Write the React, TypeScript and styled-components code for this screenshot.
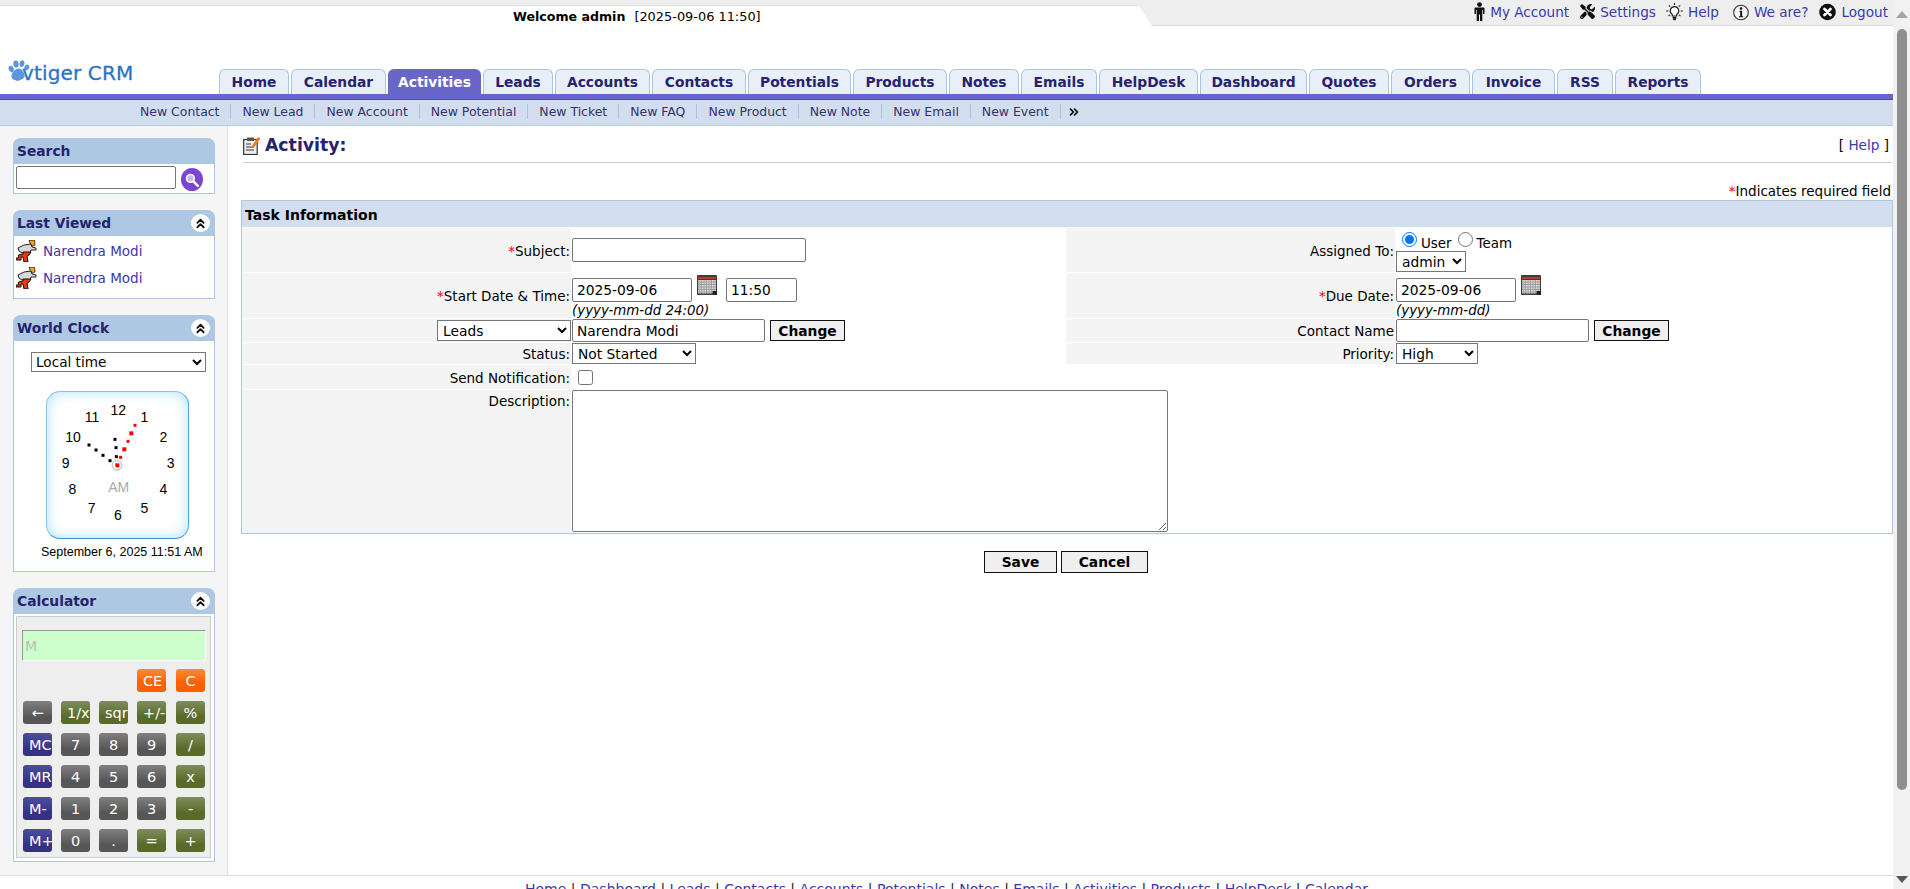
import React from "react";
import styled, { createGlobalStyle } from "styled-components";
import { FaTools } from "react-icons/fa";
import { ChevronsUp, ChevronsRight } from "lucide-react";

const UI = `"DejaVu Sans", Verdana, sans-serif`;
const LINK = "#3b38ab";
const NAVY = "#25226e";

const Global = createGlobalStyle`
  html, body { height: 100%; overflow: hidden; }
  body { margin: 0; background: #fff; font-family: ${UI}; font-size: 12.5px; color: #000; }
  * { box-sizing: border-box; }
`;

const Frame = styled.div`display: flex; height: 889px; overflow: hidden;`;
const Page = styled.div`flex: 1; min-width: 0; display: flex; flex-direction: column; overflow: hidden;`;

/* scrollbar */
const ScrollTrack = styled.div`
  width: 17px; flex: none; background: #f1f1f1; display: flex; flex-direction: column; align-items: center;
  justify-content: space-between; padding: 11px 0 6px 1px;
`;
const ScrollArrow = styled.div<{ $down?: boolean }>`
  width: 0; height: 0; border-left: 6px solid transparent; border-right: 6px solid transparent;
  ${(p) => (p.$down ? "border-top: 7px solid #555;" : "border-bottom: 7px solid #a3a3a3;")}
`;
const ScrollThumb = styled.div`
  width: 10px; height: 761px; border-radius: 5px; background: #8f8f8f; margin-top: 11px; margin-bottom: auto;
`;

/* top strip */
const TopStrip = styled.div`display: flex; height: 26px; background: #eee; flex: none;`;
const WelcomeTab = styled.div`
  width: 1152px; flex: none; margin-top: 5px; padding: 1px 0 0 513px; background: #fff; border-top: 1px solid #ddd;
  clip-path: polygon(0 0, 1138px 0, 1152px 100%, 0 100%);
  display: flex; align-items: center; gap: 9px; height: 21px; font-size: 12.9px;
`;
const WelcomeName = styled.b`font-size: 12.6px;`;
const TopLinks = styled.div`
  flex: 1; display: flex; justify-content: flex-end; align-items: center; padding: 0 5px 2px 0; border-bottom: 1px solid #ddd;
`;
const TopLink = styled.a<{ $gap: number }>`
  display: flex; align-items: center; gap: 5px; color: ${LINK}; font-size: 13.6px; margin-left: ${(p) => p.$gap}px; white-space: nowrap;
`;
const TopIconBox = styled.span<{ $w: number }>`display: flex; width: ${(p) => p.$w}px; justify-content: center; color: #111;`;

/* header */
const HeadRow = styled.div`display: flex; height: 68px; flex: none;`;
const LogoArea = styled.div`width: 219px; flex: none; padding: 34px 0 0 8px; display: flex; align-items: flex-start;`;
const LogoText = styled.span`
  color: #2b74c4; font-size: 20px; margin-left: -8px; line-height: 27px; -webkit-text-stroke: 0.3px #2b74c4; letter-spacing: 0.15px; white-space: nowrap;
`;
const Tabs = styled.div`display: flex; align-items: flex-end; gap: 2px;`;
const Tab = styled.a<{ $w: number; $on?: boolean }>`
  display: flex; align-items: center; justify-content: center; width: ${(p) => p.$w}px; height: 25px;
  font-weight: 700; font-size: 13.8px; border: 1px solid ${(p) => (p.$on ? "#6866c9" : "#aac5e2")}; border-bottom: 0;
  border-radius: 6px 6px 0 0; background: ${(p) => (p.$on ? "#6866c9" : "#e9eff9")}; color: ${(p) => (p.$on ? "#fff" : NAVY)};
`;
const PurpleBar = styled.div`height: 6px; flex: none; background: #6866c9; border-bottom: 1px solid #4f4da6;`;
const SubNav = styled.div`
  height: 26px; flex: none; background: #d2deee; border-bottom: 1px solid #b3cbe4; display: flex; align-items: center; padding: 0 0 2px 140px;
`;
const SubItem = styled.a`
  color: #34316f; font-size: 12.44px; padding: 0 11px; border-right: 1px solid #a9c4e0; line-height: 15px; white-space: nowrap;
  &:first-child { padding-left: 0; }
`;
const SubMore = styled.span`display: flex; color: #111; margin-left: 6px;`;

/* body */
const Body = styled.div`flex: 1; min-height: 0; display: flex;`;
const Sidebar = styled.aside`
  width: 228px; flex: none; background: #f5f5f5; border-right: 1px solid #ddd; padding: 12px 0 0 13px; display: flex; flex-direction: column; gap: 16px;
`;
const Panel = styled.section`width: 202px; border: 1px solid #aec8e3; border-top: 0; border-radius: 8px 8px 0 0; background: #fff;`;
const PanelHead = styled.div`
  height: 26px; margin: 0 -1px; background: #aec8e3; border-radius: 8px 8px 0 0; display: flex; align-items: center; justify-content: space-between;
  padding: 0 5px 0 4px; color: ${NAVY}; font-weight: 700; font-size: 13.8px;
`;
const Toggle = styled.span`
  width: 19px; height: 18px; border-radius: 50%; background: #fff; display: flex; align-items: center; justify-content: center; color: #111;
`;
const SearchBody = styled.div`height: 29px; display: flex; padding: 2px 0 0 2px; gap: 5px;`;
const SearchInput = styled.input`width: 160px; height: 23px; border: 1px solid #767676; border-radius: 2px; background: #fff; padding: 1px 2px;`;
const SearchBtn = styled.span`
  width: 22px; height: 23px; margin-top: 2px; border-radius: 50%; background: #7a45d3; display: flex; align-items: center; justify-content: center;
`;
const ViewedList = styled.div`height: 62px; padding-top: 1px;`;
const ViewedRow = styled.a`display: flex; align-items: center; gap: 6px; height: 27px; padding-left: 2px; color: ${LINK}; font-size: 13.5px;`;
const ClockBody = styled.div`height: 230px; padding-top: 11px;`;
const ClockSelect = styled.select`
  display: block; width: 175px; height: 20px; margin-left: 17px; border: 1px solid #767676; background: #fff; font: 13.6px ${UI}; color: #000; padding: 0;
`;
const ClockFace = styled.div`
  width: 143px; height: 148px; margin: 19px 0 0 32px; border-radius: 14px; border: 1px solid #8fc0e2; border-bottom-color: #3f8fc8;
  border-right-color: #5aa2d4; background: #fff; box-shadow: inset 0 0 13px #a9e2ff; overflow: hidden;
`;
const ClockDate = styled.div`
  margin: 5px 0 0 27px; font: 12.5px "Liberation Sans", Arial, sans-serif; white-space: nowrap; line-height: 16px;
`;
const CalcBody = styled.div`
  width: 195px; height: 242px; margin: 2px 0 3px 2px; background: #eee; border: 1px solid #ccc; padding: 13px 0 0 5px;
`;
const CalcDisplay = styled.div`
  width: 184px; height: 31px; background: #ccffcc; border: 1px solid #fff; border-top-color: #999; border-left-color: #999; color: #bbb; font-size: 14px;
  padding: 6px 0 0 2px; line-height: 18px;
`;
const CalcGrid = styled.div`
  display: grid; grid-template-columns: 29px 29px 29px 30px 29px; column-gap: 9px; row-gap: 9px; grid-auto-rows: 23px; margin: 8px 0 0 1px;
`;
const tones = {
  orange: "linear-gradient(#ff8a3c, #f86000 60%)",
  grey: "linear-gradient(#808080, #565656 70%)",
  green: "linear-gradient(#7e8d5c, #5a6a2a 70%)",
  blue: "linear-gradient(#4f4ca6, #353285 70%)",
};
const CalcKey = styled.span<{ $tone: keyof typeof tones; $col?: number }>`
  display: flex; align-items: center; justify-content: safe center; width: 29px; padding: 0 6px; overflow: hidden; white-space: nowrap;
  border-radius: 3px; color: #fff; font-size: 14.5px; background: ${(p) => tones[p.$tone]};
  ${(p) => (p.$col ? `grid-column: ${p.$col};` : "")}
`;

/* main */
const Main = styled.main`flex: 1; min-width: 0; padding: 0 0 0 13px; display: flex; flex-direction: column;`;
const TitleRow = styled.div`
  height: 37px; margin: 0 1px 0 2px; border-bottom: 1px solid #ccc; display: flex; align-items: center; justify-content: space-between; padding-top: 2px;
`;
const Title = styled.h1`margin: 0; display: flex; align-items: center; gap: 4px; font-size: 17.300px; font-weight: 700; color: ${NAVY};`;
const HelpLink = styled.span`font-size: 13.6px; padding-right: 3px; a { color: ${LINK}; }`;
const Required = styled.div`height: 37px; display: flex; align-items: flex-end; justify-content: flex-end; padding: 0 2px 1px 0; font-size: 13.5px; line-height: 16px;`;
const Star = styled.span`color: #f00;`;

const FormTable = styled.div`
  height: 334px; border: 1px solid #aec8e3; display: grid; grid-template-columns: 329px 495px 329px 1fr;
  grid-template-rows: 26px 44px 45px 23px 21px 24px 1fr; row-gap: 1px;
`;
const FormHead = styled.div`
  grid-column: 1 / -1; background: #d2deee; font-weight: 700; font-size: 14px; display: flex; align-items: center; padding: 1px 0 0 3px;
`;
const Label = styled.div<{ $top?: boolean }>`
  background: #f4f4f4; display: flex; justify-content: flex-end; align-items: ${(p) => (p.$top ? "flex-start" : "center")};
  padding: ${(p) => (p.$top ? "2px 1px 0 0" : "1px 1px 0 0")}; font-size: 13.5px; white-space: nowrap; line-height: 18px;
`;
const LabelSelectCell = styled(Label)`align-items: center; padding: 0;`;
const Value = styled.div`padding-left: 1px; display: flex; align-items: center; gap: 5px; min-width: 0;`;
const ValueStack = styled.div`padding: 5px 0 0 1px; min-width: 0;`;
const ValueLine = styled.div`display: flex; align-items: flex-start;`;
const Hint = styled.div`font-style: italic; font-size: 13.4px; line-height: 16px; margin-top: 1px;`;
const Blank = styled.div``;
const TextInput = styled.input<{ $w: number; $h?: number }>`
  width: ${(p) => p.$w}px; height: ${(p) => p.$h ?? 24}px; border: 1px solid #767676; border-radius: 2px; background: #fff; padding: 1px 4px;
  font: 13.8px ${UI}; color: #000;
`;
const Select = styled.select<{ $w: number }>`
  width: ${(p) => p.$w}px; height: 21px; border: 1px solid #767676; border-radius: 0; background: #fff; font: 13.8px ${UI}; color: #000; padding: 1px 0 0 1px;
`;
const LookupBtn = styled.button`
  width: 75px; height: 21px; padding: 0; background: #efefef; border: 1px solid #111; color: #000; font: 700 13.8px ${UI};
`;
const CalIcon = styled.span<{ $ml: number; $mr?: number }>`display: flex; margin: -3px ${(p) => p.$mr ?? 0}px 0 ${(p) => p.$ml}px;`;
const Check = styled.input`width: 15px; height: 15px; margin: 0 0 0 6px;`;
const AssignLine = styled.div`display: flex; align-items: flex-start; height: 19px; margin-left: 6px; font-size: 13.4px;`;
const Radio = styled.input`width: 15px; height: 15px; margin: 0;`;
const RadioText = styled.span<{ $r: number }>`margin: 4px ${(p) => p.$r}px 0 4px; line-height: 16px;`;
const AssignStack = styled.div`padding: 4px 0 0 1px;`;
const Area = styled.textarea`
  display: block; width: 596px; height: 142px; border: 1px solid #767676; border-radius: 2px; background: #fff; padding: 2px; font: 13.3px ${UI};
`;
const AreaCell = styled.div`grid-column: 2 / -1; padding-left: 1px;`;
const Actions = styled.div`display: flex; justify-content: center; gap: 4px; margin-top: 17px; padding-right: 2px;`;
const ActionBtn = styled.button<{ $w: number }>`
  width: ${(p) => p.$w}px; height: 22px; padding: 0; background: #efefef; border: 1px solid #111; color: #000; font: 700 13.8px ${UI};
`;
const Footer = styled.footer`
  flex: none; height: 14px; border-top: 1px solid #ddd; text-align: center; font-size: 14px; padding-top: 5px; line-height: 16px; white-space: nowrap; color: #222;
  a { color: ${LINK}; }
`;

/* icons */
const PersonIcon = () => (
  <svg width="11" height="19" viewBox="0 0 11 19" fill="#111">
    <circle cx="5.5" cy="2.6" r="2.4" />
    <path d="M1.5 5.6h8a1 1 0 0 1 1 1V12H9v-4H8.3v11H6V12.5H5V19H2.7V8H2v4H.5V6.6a1 1 0 0 1 1-1z" />
  </svg>
);
const BulbIcon = () => (
  <svg width="17" height="18" viewBox="0 0 17 18" fill="none" stroke="#222" strokeWidth="1.2">
    <path d="M8.5 3.6a4.2 4.2 0 0 0-2.2 7.8v1.6h4.4v-1.6a4.2 4.2 0 0 0-2.2-7.8z" fill="#fff" />
    <path d="M6.6 14.6h3.8M7.2 16.4h2.6" strokeWidth="1.6" />
    <path d="M8.5 0v2M2.8 2.3l1.4 1.4M14.2 2.3l-1.4 1.4M.2 8h2.2M14.6 8h2.2M2.6 13l1.4-1.2M14.4 13 13 11.800" strokeWidth="1.1" />
  </svg>
);
const InfoIcon = () => (
  <svg width="16" height="18" viewBox="0 0 16 18" fill="none">
    <circle cx="8" cy="9.500" r="7.300" stroke="#333" strokeWidth="1.100" fill="#f6f6f6" />
    <circle cx="8" cy="5.500" r="1.300" fill="#111" />
    <path d="M6.500 7.800h2.600v5.400h1.100v1H6v-1h1.200V8.800H6.500z" fill="#111" />
  </svg>
);
const LogoutIcon = () => (
  <svg width="17" height="18" viewBox="0 0 17 18">
    <circle cx="8.500" cy="9" r="8.300" fill="#111" />
    <path d="M5.500 6l6 6M11.500 6l-6 6" stroke="#fff" strokeWidth="2.800" strokeLinecap="round" />
  </svg>
);
const PawIcon = () => (
  <svg width="22" height="22" viewBox="0 0 22 22" fill="#5a97dc">
    <ellipse cx="3.200" cy="9" rx="2.500" ry="3.200" transform="rotate(-25 3.200 9)" />
    <ellipse cx="8" cy="4" rx="2.600" ry="3.600" transform="rotate(-10 8 4)" />
    <ellipse cx="14" cy="3.600" rx="2.400" ry="3.400" transform="rotate(10 14 3.600)" />
    <ellipse cx="18.800" cy="7.500" rx="2.300" ry="3" transform="rotate(30 18.800 7.500)" />
    <path d="M10.500 8.500c3.500 0 5.500 4 6 7 .4 3-2.400 3.500-6.500 5.500-3-1-7-1.500-6.500-5.500.5-3 3.500-7 7-7z" />
  </svg>
);
const MagnifierIcon = () => (
  <svg width="16" height="16" viewBox="0 0 15 15" fill="none">
    <circle cx="6" cy="6" r="3.600" stroke="#fff" strokeWidth="1.500" fill="#c9b8f0" />
    <path d="M9 9l4 4" stroke="#fff" strokeWidth="2.400" strokeLinecap="round" />
  </svg>
);
const RunnerIcon = () => (
  <svg width="21" height="22" viewBox="0 0 21 22">
    <path d="M13 .5l5.500-.5.5 5-3.500 1.500z" fill="#f0a020" stroke="#222" strokeWidth=".8" />
    <path d="M2 8l6-3 7-1 1 3 4 1v2h-5l-1 3H6L3 11z" fill="#d8d8d8" stroke="#222" strokeWidth="1" />
    <path d="M7 12h8l-2 3-2 1 1 6H8l-1-5H5v3H0v-2h2.500v-3l4.500-1z" fill="#e63a10" stroke="#111" strokeWidth="1" />
  </svg>
);
const TitleIcon = () => (
  <svg width="18" height="19" viewBox="0 0 18 19">
    <rect x=".7" y="3.500" width="13.500" height="15" fill="#eee" stroke="#333" strokeWidth="1.200" />
    <rect x="4" y="1.500" width="7" height="3.500" fill="#555" />
    <path d="M3 8h5M3 11h8M3 14h8" stroke="#333" strokeWidth="1" />
    <path d="M9 10l6-9 2.500 1.500L11 11.500z" fill="#f07a1a" />
  </svg>
);
const CalendarIcon = () => (
  <svg width="20" height="20" viewBox="0 0 20 20">
    <defs>
      <pattern id="calGrid" width="2.500" height="2.500" patternUnits="userSpaceOnUse">
        <rect width="2.500" height="2.500" fill="#9a9a9a" />
        <rect width="1.500" height="1.500" fill="#e4e4e4" />
      </pattern>
    </defs>
    <rect width="20" height="20" rx="1" fill="#3c3c3c" />
    <rect x="1" y="2" width="18" height="2" fill="#c8332e" />
    <rect x="1" y="5" width="18" height="13.500" fill="url(#calGrid)" />
    <rect x="15.500" y="16" width="4.500" height="4" fill="#222" />
  </svg>
);
const ClockDrawing = () => {
  const nums: [string, number, number][] = [
    ["12", 72.3, 19], ["1", 98.3, 26.3], ["2", 117.3, 46.3], ["3", 124.7, 72.3], ["4", 117.3, 98.3], ["5", 98.3, 117.3],
    ["6", 72, 124.3], ["7", 45.7, 117.3], ["8", 26.3, 98.3], ["9", 19.7, 72.3], ["10", 27, 46.3], ["11", 46, 26.3],
  ];
  const black: [number, number][] = [[147, 180], [168, 195], [189, 211], [210, 227], [225, 163], [228, 188], [229, 215]];
  const red: [number, number, number][] = [[285, 121, 3], [274, 145, 4], [264, 169, 3], [253, 193, 4], [242, 217, 3], [232, 241, 4]];
  return (
    <svg width="141" height="146" viewBox="1 1 141 146" fontFamily="Liberation Sans, Arial, sans-serif">
      {nums.map(([t, x, y]) => (
        <text key={t} x={x} y={y + 5} fontSize="14" textAnchor="middle" fill="#000">{t}</text>
      ))}
      <text x="72.700" y="100.500" fontSize="14" textAnchor="middle" fill="#aaa">AM</text>
      <circle cx="71" cy="74.300" r="4.700" fill="none" stroke="#ccc" strokeWidth="1.500" />
      {black.map(([x, y]) => (
        <rect key={x} x={x / 3 - 7.500} y={y / 3 - 7.500} width="3" height="3" fill="#000" />
      ))}
      {red.map(([x, y, s]) => (
        <rect key={x} x={x / 3 - 6 - s / 2} y={y / 3 - 6 - s / 2} width={s} height={s} fill="#f00" />
      ))}
    </svg>
  );
};

const tabs: [string, number][] = [
  ["Home", 70], ["Calendar", 95], ["Activities", 93], ["Leads", 70], ["Accounts", 95], ["Contacts", 94], ["Potentials", 103], ["Products", 94],
  ["Notes", 70], ["Emails", 76], ["HelpDesk", 99], ["Dashboard", 107], ["Quotes", 80], ["Orders", 79], ["Invoice", 83], ["RSS", 56], ["Reports", 86],
];
const subs = ["New Contact", "New Lead", "New Account", "New Potential", "New Ticket", "New FAQ", "New Product", "New Note", "New Email", "New Event"];
const keys: [string, keyof typeof tones][] = [
  ["←", "grey"], ["1/x", "green"], ["sqrt", "green"], ["+/-", "green"], ["%", "green"],
  ["MC", "blue"], ["7", "grey"], ["8", "grey"], ["9", "grey"], ["/", "green"],
  ["MR", "blue"], ["4", "grey"], ["5", "grey"], ["6", "grey"], ["x", "green"],
  ["M-", "blue"], ["1", "grey"], ["2", "grey"], ["3", "grey"], ["-", "green"],
  ["M+", "blue"], ["0", "grey"], [".", "grey"], ["=", "green"], ["+", "green"],
];
const footerLinks = ["Home", "Dashboard", "Leads", "Contacts", "Accounts", "Potentials", "Notes", "Emails", "Activities", "Products", "HelpDesk", "Calendar"];

const Up = () => (
  <Toggle><ChevronsUp size={15} strokeWidth={3} /></Toggle>
);

export default function App() {
  return (
    <Frame>
      <Global />
      <Page>
        <TopStrip>
          <WelcomeTab>
            <WelcomeName>Welcome admin</WelcomeName>
            <span>[2025-09-06 11:50]</span>
          </WelcomeTab>
          <TopLinks>
            <TopLink $gap={0}><TopIconBox $w={11}><PersonIcon /></TopIconBox>My Account</TopLink>
            <TopLink $gap={10}><TopIconBox $w={16}><FaTools size={15} /></TopIconBox>Settings</TopLink>
            <TopLink $gap={10}><TopIconBox $w={17}><BulbIcon /></TopIconBox>Help</TopLink>
            <TopLink $gap={14}><TopIconBox $w={16}><InfoIcon /></TopIconBox>We are?</TopLink>
            <TopLink $gap={11}><TopIconBox $w={17}><LogoutIcon /></TopIconBox>Logout</TopLink>
          </TopLinks>
        </TopStrip>
        <HeadRow>
          <LogoArea>
            <PawIcon />
            <LogoText>vtiger CRM</LogoText>
          </LogoArea>
          <Tabs>
            {tabs.map(([t, w]) => (
              <Tab key={t} $w={w} $on={t === "Activities"}>{t}</Tab>
            ))}
          </Tabs>
        </HeadRow>
        <PurpleBar />
        <SubNav>
          {subs.map((s) => <SubItem key={s}>{s}</SubItem>)}
          <SubMore><ChevronsRight size={14} strokeWidth={3} /></SubMore>
        </SubNav>
        <Body>
          <Sidebar>
            <Panel>
              <PanelHead>Search</PanelHead>
              <SearchBody>
                <SearchInput />
                <SearchBtn><MagnifierIcon /></SearchBtn>
              </SearchBody>
            </Panel>
            <Panel>
              <PanelHead>Last Viewed<Up /></PanelHead>
              <ViewedList>
                <ViewedRow><RunnerIcon />Narendra Modi</ViewedRow>
                <ViewedRow><RunnerIcon />Narendra Modi</ViewedRow>
              </ViewedList>
            </Panel>
            <Panel>
              <PanelHead>World Clock<Up /></PanelHead>
              <ClockBody>
                <ClockSelect defaultValue="Local time"><option>Local time</option></ClockSelect>
                <ClockFace><ClockDrawing /></ClockFace>
                <ClockDate>September 6, 2025 11:51 AM</ClockDate>
              </ClockBody>
            </Panel>
            <Panel>
              <PanelHead>Calculator<Up /></PanelHead>
              <CalcBody>
                <CalcDisplay>M</CalcDisplay>
                <CalcGrid>
                  <CalcKey $tone="orange" $col={4}>CE</CalcKey>
                  <CalcKey $tone="orange" $col={5}>C</CalcKey>
                  {keys.map(([k, t], i) => <CalcKey key={i} $tone={t}>{k}</CalcKey>)}
                </CalcGrid>
              </CalcBody>
            </Panel>
          </Sidebar>
          <Main>
            <TitleRow>
              <Title><TitleIcon />Activity:</Title>
              <HelpLink>[ <a>Help</a> ]</HelpLink>
            </TitleRow>
            <Required><Star>*</Star>Indicates required field</Required>
            <FormTable>
              <FormHead>Task Information</FormHead>

              <Label><Star>*</Star>Subject:</Label>
              <Value><TextInput $w={234} /></Value>
              <Label>Assigned To:</Label>
              <AssignStack>
                <AssignLine>
                  <Radio type="radio" name="owner" defaultChecked />
                  <RadioText $r={6}>User</RadioText>
                  <Radio type="radio" name="owner" />
                  <RadioText $r={0}>Team</RadioText>
                </AssignLine>
                <Select $w={70} defaultValue="admin"><option>admin</option></Select>
              </AssignStack>

              <Label><Star>*</Star>Start Date &amp; Time:</Label>
              <ValueStack>
                <ValueLine>
                  <TextInput $w={120} defaultValue="2025-09-06" />
                  <CalIcon $ml={5} $mr={9}><CalendarIcon /></CalIcon>
                  <TextInput $w={71} defaultValue="11:50" />
                </ValueLine>
                <Hint>(yyyy-mm-dd 24:00)</Hint>
              </ValueStack>
              <Label><Star>*</Star>Due Date:</Label>
              <ValueStack>
                <ValueLine>
                  <TextInput $w={120} defaultValue="2025-09-06" />
                  <CalIcon $ml={5}><CalendarIcon /></CalIcon>
                </ValueLine>
                <Hint>(yyyy-mm-dd)</Hint>
              </ValueStack>

              <LabelSelectCell>
                <Select $w={134} defaultValue="Leads"><option>Leads</option></Select>
              </LabelSelectCell>
              <Value><TextInput $w={193} $h={23} defaultValue="Narendra Modi" /><LookupBtn>Change</LookupBtn></Value>
              <Label>Contact Name</Label>
              <Value><TextInput $w={193} $h={23} /><LookupBtn>Change</LookupBtn></Value>

              <Label>Status:</Label>
              <Value><Select $w={124} defaultValue="Not Started"><option>Not Started</option></Select></Value>
              <Label>Priority:</Label>
              <Value><Select $w={82} defaultValue="High"><option>High</option></Select></Value>

              <Label>Send Notification:</Label>
              <Value><Check type="checkbox" /></Value>
              <Blank />
              <Blank />

              <Label $top>Description:</Label>
              <AreaCell><Area /></AreaCell>
            </FormTable>
            <Actions>
              <ActionBtn $w={73}>Save</ActionBtn>
              <ActionBtn $w={87}>Cancel</ActionBtn>
            </Actions>
          </Main>
        </Body>
        <Footer>
          {footerLinks.map((l, i) => (
            <React.Fragment key={l}>
              {i > 0 && " | "}
              <a>{l}</a>
            </React.Fragment>
          ))}
        </Footer>
      </Page>
      <ScrollTrack>
        <ScrollArrow />
        <ScrollThumb />
        <ScrollArrow $down />
      </ScrollTrack>
    </Frame>
  );
}
